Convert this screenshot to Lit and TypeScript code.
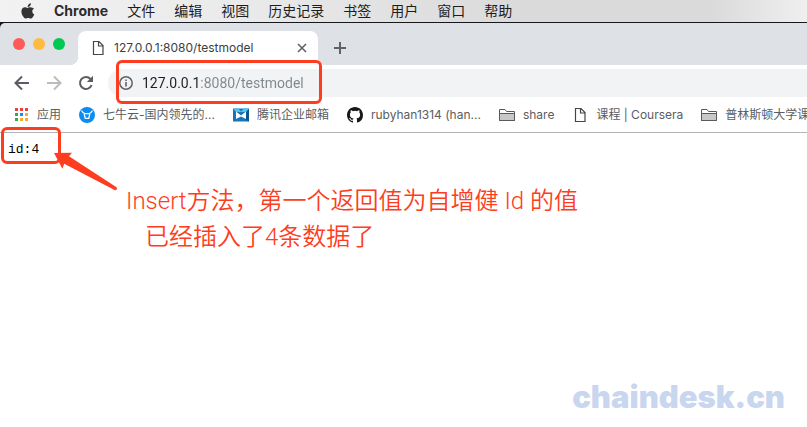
import { LitElement, html, css, svg } from "lit";
import { customElement, property } from "lit/decorators.js";

const glyphs: Record<string, unknown> = {
  apps: svg`<svg width="16" height="16" viewBox="0 0 16 16">
    <path fill="#ea4335" d="M2 1h3v3H2zM7 1h3v3H7zM12 1h3v3h-3z"/>
    <path fill="#34a853" d="M2 6h3v3H2zM2 11h3v3H2z"/><path fill="#1a8cf0" d="M7 6h3v3H7z"/>
    <path fill="#fbab2c" d="M12 6h3v3h-3zM7 11h3v3H7zM12 11h3v3h-3z"/></svg>`,
  qiniu: svg`<svg width="16" height="16" viewBox="0 0 16 16">
    <circle cx="8" cy="8" r="8" fill="#0a8cf0"/>
    <path d="M2.800 4Q4 6.400 6 6.600H10Q12 6.400 13.200 4" fill="none" stroke="#fff" stroke-width="1.200" stroke-linecap="round"/>
    <path d="M5.200 7L6.200 11.400H9.800L10.800 7" fill="none" stroke="#fff" stroke-width="1.300" stroke-linejoin="round"/></svg>`,
  mail: svg`<svg width="16" height="16" viewBox="0 0 16 16">
    <path fill="#1676b8" d="M0 1.500h16v13H0z"/>
    <path fill="#0d5590" d="M12.500 5L16 2v12.500l-3.500-2z"/>
    <path fill="#4fc3ee" d="M0 1.500h5.500L8 4.500l2.500-3H16L13 5H3z"/>
    <path fill="#fff" d="M3 4.500l5 4 5-4v7.500L8 9.500 3 12z"/></svg>`,
  github: svg`<svg width="16" height="16" viewBox="0 0 16 16">
    <path fill="#191717" d="M8 0C3.580 0 0 3.580 0 8c0 3.540 2.290 6.530 5.470 7.590.4.070.55-.17.55-.38 0-.19-.01-.82-.01-1.490-2.010.37-2.530-.49-2.690-.94-.09-.23-.48-.94-.82-1.130-.28-.15-.68-.52-.01-.53.63-.01 1.080.58 1.230.82.72 1.210 1.870.87 2.330.66.070-.52.28-.87.51-1.070-1.780-.2-3.640-.89-3.640-3.950 0-.87.31-1.590.82-2.150-.08-.2-.36-1.020.08-2.120 0 0 .67-.21 2.200.82a7.600 7.600 0 0 1 4 0c1.530-1.040 2.200-.82 2.200-.82.44 1.100.16 1.920.08 2.120.51.56.82 1.270.82 2.150 0 3.070-1.870 3.750-3.650 3.950.29.25.54.73.54 1.480 0 1.070-.01 1.930-.01 2.200 0 .21.15.46.55.38A8.010 8.010 0 0 0 16 8c0-4.420-3.580-8-8-8z"/></svg>`,
  folder: svg`<svg width="16" height="16" viewBox="0 0 16 16">
    <path d="M.5 2.500h5.500l1.500 2h8v9H.5z" fill="#fff" stroke="#5a5a5a"/>
    <path d="M.5 6.500h15v7H.5z" fill="#c8c8c8" stroke="#5a5a5a"/></svg>`,
  page: svg`<svg width="16" height="16" viewBox="0 0 16 16">
    <path d="M3.500 1.500h5.500l4 4v9H3.500zM8.500 1.500v4.500h4.500" fill="#fff" stroke="#454545" stroke-width="1.200"/></svg>`,
  close: svg`<svg width="10" height="10" viewBox="0 0 10 10"><path d="M1 1l8 8M9 1l-8 8" stroke="#5f6368" stroke-width="1.600"/></svg>`,
  plus: svg`<svg width="14" height="14" viewBox="0 0 14 14"><path d="M7 1v12M1 7h12" stroke="#5f6368" stroke-width="2"/></svg>`,
  back: svg`<svg width="16" height="16" viewBox="0 0 16 16"><path d="M15 8H2M8 1.500L1.500 8L8 14.500" fill="none" stroke="#5a5d61" stroke-width="2"/></svg>`,
  forward: svg`<svg width="16" height="16" viewBox="0 0 16 16"><path d="M1 8h13M8 1.500L14.500 8L8 14.500" fill="none" stroke="#babcbe" stroke-width="2"/></svg>`,
  reload: svg`<svg width="16" height="16" viewBox="0 0 16 16"><path d="M13.600 10.200A6 6 0 1 1 12.500 4" fill="none" stroke="#5a5d61" stroke-width="2"/><path d="M15 .8v6.200H8.800z" fill="#5a5d61"/></svg>`,
  info: svg`<svg width="14" height="14" viewBox="0 0 14 14"><circle cx="7" cy="7" r="6.200" fill="none" stroke="#5f6368" stroke-width="1.500"/><path d="M7 6v4.500M7 3.500v1.600" stroke="#5f6368" stroke-width="1.600"/></svg>`,
  apple: svg`<svg width="14" height="16" viewBox="0 0 14 16"><path fill="#333" d="M9.900.2c.1 1.200-.4 2.100-1 2.800-.6.700-1.400 1.100-2.200 1C6.600 3 7 2.100 7.600 1.400 8.200.7 9.100.3 9.900.2zM12.900 5.700c-1 .6-1.600 1.500-1.600 2.700 0 1.400.8 2.400 2 2.900-.3.900-.7 1.700-1.300 2.500-.6.900-1.300 1.800-2.300 1.800s-1.300-.6-2.500-.6-1.600.6-2.500.6c-1 0-1.800-1-2.500-2C.9 11.700.1 9.500.5 7.400.9 5.500 2.300 4.300 3.900 4.300c1 0 1.900.7 2.500.7s1.700-.8 3-.7c1.400.1 2.700.5 3.500 1.400z"/></svg>`,
};

@customElement("menu-bar")
class MenuBar extends LitElement {
  static styles = css`
    :host {
      display: block;
      background: linear-gradient(90deg, #f2f2f2, #eaeaea 30%, #dadada 65%, #dadada 88%, #efefef);
      border-bottom: 1px solid #16181d;
    }
    .bar { display: flex; align-items: center; height: 22px; gap: 19px; padding-left: 21px; }
    button {
      border: 0; padding: 0; background: none; color: #1d1d1d; white-space: nowrap; flex: none;
      font: 14px/22px Inter, "Noto Sans CJK SC", sans-serif;
    }
    .logo { display: flex; width: 14px; }
    .app { font-weight: 700; color: #2c2c2c; }
  `;
  render() {
    return html`<nav class="bar">
      <button class="logo" aria-label="Apple">${glyphs.apple}</button>
      <button class="app">Chrome</button>
      ${["文件", "编辑", "视图", "历史记录", "书签", "用户", "窗口", "帮助"].map((m) => html`<button>${m}</button>`)}
    </nav>`;
  }
}

@customElement("tab-strip")
class TabStrip extends LitElement {
  static styles = css`
    :host { display: block; background: #16181d; }
    .strip {
      display: flex; align-items: flex-end; height: 42px; gap: 13px; padding-left: 13px;
      background: #dee1e6; border-top-left-radius: 5px;
    }
    .lights { display: flex; gap: 8px; align-self: center; }
    .light { width: 12px; height: 12px; border-radius: 50%; border: 0; padding: 0; }
    .red { background: #fc5b57; }
    .amber { background: #fdbc40; }
    .green { background: #00c853; }
    .tab {
      position: relative; display: flex; align-items: center; flex: 0 0 240px; box-sizing: border-box;
      height: 34px; padding: 0 11px 0 12px; gap: 8px; background: #fff; border-radius: 8px 8px 0 0;
    }
    .tab::before, .tab::after { content: ""; position: absolute; bottom: 0; width: 8px; height: 8px; }
    .tab::before { left: -8px; background: radial-gradient(circle at 0 0, transparent 8px, #fff 8px); }
    .tab::after { right: -8px; background: radial-gradient(circle at 100% 0, transparent 8px, #fff 8px); }
    .title { flex: 1; font: 12px/16px Inter, sans-serif; color: #3c4043; white-space: nowrap; }
    .icon { display: flex; border: 0; padding: 0; background: none; }
    .add { height: 34px; align-items: center; margin-left: 2px; }
  `;
  render() {
    return html`<div class="strip">
      <div class="lights">
        <button class="light red" aria-label="Close window"></button>
        <button class="light amber" aria-label="Minimise"></button>
        <button class="light green" aria-label="Zoom"></button>
      </div>
      <div class="tab">
        <span class="icon">${glyphs.page}</span>
        <span class="title">127.0.0.1:8080/testmodel</span>
        <button class="icon" aria-label="Close tab">${glyphs.close}</button>
      </div>
      <button class="icon add" aria-label="New tab">${glyphs.plus}</button>
    </div>`;
  }
}

@customElement("address-bar")
class AddressBar extends LitElement {
  static styles = css`
    :host { display: block; overflow-x: clip; }
    .bar { display: flex; align-items: center; padding: 4px 0 0 14px; gap: 16px; }
    .icon { display: flex; flex: none; border: 0; padding: 0; background: none; }
    .field {
      position: relative; display: flex; align-items: center; flex: 1; min-width: 0; height: 28px; gap: 9px;
      margin-left: -2px; padding-left: 11px; background: #f1f3f4; border-radius: 14px 0 0 14px;
    }
    .url {
      flex: 1; min-width: 0; border: 0; padding: 0; outline: 0; font: 14px/20px Roboto, sans-serif;
      color: #202124; -webkit-text-fill-color: transparent;
      background: linear-gradient(90deg, #202124 58px, #80868b 58px); -webkit-background-clip: text; background-clip: text;
    }
    .mark {
      position: absolute; left: 8px; top: -9px; width: 206px; height: 44px; box-sizing: border-box;
      border: 3px solid #fe3d20; border-radius: 6px; pointer-events: none;
    }
  `;
  render() {
    return html`<div class="bar">
      <button class="icon" aria-label="Back">${glyphs.back}</button>
      <button class="icon" aria-label="Forward">${glyphs.forward}</button>
      <button class="icon" aria-label="Reload">${glyphs.reload}</button>
      <div class="field">
        <span class="icon">${glyphs.info}</span>
        <input class="url" aria-label="Address" .value=${"127.0.0.1:8080/testmodel"} />
        <div class="mark"></div>
      </div>
    </div>`;
  }
}

@customElement("bookmark-link")
class BookmarkLink extends LitElement {
  @property() icon = "page";
  @property() label = "";
  static styles = css`
    :host { display: block; flex: none; }
    a {
      display: flex; align-items: center; gap: 8px; color: #5a5d61; text-decoration: none; white-space: nowrap;
      font: 12px/16px Inter, "Noto Sans CJK SC", sans-serif;
    }
    svg { display: block; flex: none; }
  `;
  render() {
    return html`<a href="#">${glyphs[this.icon]}<span>${this.label}</span></a>`;
  }
}

@customElement("bookmark-bar")
class BookmarkBar extends LitElement {
  static styles = css`
    :host {
      display: flex; align-items: center; gap: 18px; height: 35px; padding-left: 13px; overflow: hidden;
      border-bottom: 1px solid #b4b5b6;
    }
  `;
  render() {
    return [
      ["apps", "应用"],
      ["qiniu", "七牛云-国内领先的..."],
      ["mail", "腾讯企业邮箱"],
      ["github", "rubyhan1314 (han..."],
      ["folder", "share"],
      ["page", "课程 | Coursera"],
      ["folder", "普林斯顿大学课"],
    ].map(([icon, label]) => html`<bookmark-link icon=${icon} label=${label}></bookmark-link>`);
  }
}

@customElement("app-root")
class AppRoot extends LitElement {
  static styles = css`
    :host { display: flex; flex-direction: column; min-height: 100vh; background: #fff; }
    .page { position: relative; flex: 1; display: flex; flex-direction: column; padding: 9px 8px; }
    .output { margin: 0; font: 13px/16px "Liberation Mono", monospace; color: #000; }
    .mark {
      position: absolute; left: 1px; top: -6px; width: 60px; height: 37px; box-sizing: border-box;
      border: 3px solid #fe3d20; border-radius: 6px;
    }
    .arrow { position: absolute; left: 50px; top: 16px; }
    .note {
      margin: 25px 0 0 118px; color: #fe3d20; font: 24px/36px Roboto, "Noto Sans CJK SC", sans-serif;
      font-weight: 350;
    }
    .note p { margin: 0; }
    .note .second { padding-left: 19px; }
    .brand {
      margin: auto 14px 0 auto; padding-bottom: 3px; color: #c8d6f0;
      font: 900 31px/36px Inter, sans-serif;
    }
  `;
  render() {
    return html`
      <menu-bar></menu-bar>
      <tab-strip></tab-strip>
      <address-bar></address-bar>
      <bookmark-bar></bookmark-bar>
      <main class="page">
        <pre class="output">id:4</pre>
        <div class="mark"></div>
        <svg class="arrow" width="70" height="44" viewBox="0 0 70 44">
          <path fill="#fe3d20" d="M4 4L22 3.700L19 7.200L66.500 38.300Q68 41 65 41.200L14.200 14.800L12.400 19.800Z" />
        </svg>
        <div class="note">
          <p>Insert方法，第一个返回值为自增健 Id 的值</p>
          <p class="second">已经插入了4条数据了</p>
        </div>
        <div class="brand">chaindesk.cn</div>
      </main>
    `;
  }
}
